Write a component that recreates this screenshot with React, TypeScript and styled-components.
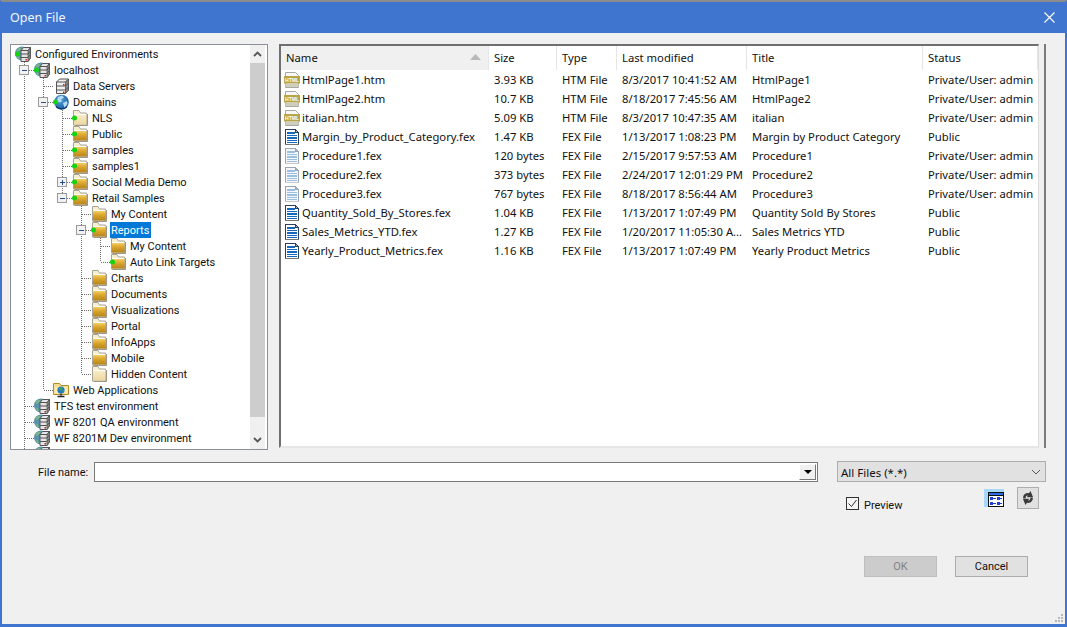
import React from 'react';
import styled, { createGlobalStyle } from 'styled-components';

const Global = createGlobalStyle`
  html, body { margin: 0; padding: 0; background: #f0f0f0; }
  * { box-sizing: border-box; }
`;

const narrowFont = `Roboto, "Noto Sans", sans-serif`;

const Window = styled.div`
  width: 1067px; height: 627px; display: flex; flex-direction: column; overflow: hidden; position: relative;
  background: #f0f0f0; color: #111;
  font-family: ${narrowFont}; font-size: 11px;
  border-top: 2px solid #8c8c8c; border-left: 2px solid #3f75cf; border-right: 2px solid #3f75cf; border-bottom: 3px solid #3f75cf;
`;
const TitleBar = styled.div`
  height: 31px; flex: none; background: #3f75cf; color: #f2f6fc; display: flex; align-items: center; justify-content: space-between;
  padding: 0 10px 0 8px; font-family: "Noto Sans", sans-serif; font-size: 12.5px;
`;
const Panels = styled.div`
  display: flex; gap: 11px; padding: 11px 19px 0 8px; height: 428px; flex: none; align-items: flex-start;
`;
const TreePanel = styled.div`
  width: 258px; height: 406px; flex: none; display: flex; background: #fff; border: 1px solid #8a8f98; overflow: hidden;
  padding: 0 2px 0 0;
`;
const TreeList = styled.div`flex: 1; padding-top: 1px; overflow: hidden; min-width: 0;`;
const Row = styled.div`height: 16px; display: flex; align-items: center; white-space: nowrap;`;
const RowLabel = styled.span<{ $selected?: boolean }>`
  margin-left: 3px; padding: 0 2px 0 1px; height: 16px; line-height: 18px;
  background: ${p => (p.$selected ? '#0078d7' : 'transparent')};
  color: ${p => (p.$selected ? '#fff' : '#111')};
`;
const ScrollBar = styled.div`
  width: 15px; flex: none; background: #f0f0f0; display: flex; flex-direction: column;
`;
const ScrollArrow = styled.div`height: 18px; flex: none; display: flex; align-items: center; justify-content: center;`;
const ScrollTrack = styled.div`flex: 1; display: flex; flex-direction: column;`;
const ScrollThumb = styled.div`height: 354px; background: #cdcdcd;`;

const ListFrame = styled.div`
  width: 767px; height: 404px; flex: none; display: flex; border-right: 2px solid #7a7a7a; padding-right: 5px;
`;
const ListInner = styled.div`
  flex: 1; min-width: 0; background: #fff; border-top: 2px solid #6f6f6f; border-left: 2px solid #6f6f6f;
  border-right: 1px solid #dcdcdc; border-bottom: 2px solid #e6e6e6; overflow: hidden;
  font-family: "Noto Sans", sans-serif; font-size: 11.25px;
`;
const gridCols = '208px 68px 60px 130px 176px 1fr';
const HeaderRow = styled.div`display: grid; grid-template-columns: ${gridCols}; height: 24px;`;
const HeaderCell = styled.div<{ $sorted?: boolean }>`
  display: flex; align-items: center; justify-content: space-between; padding: 0 7px 2px 5px;
  background: ${p => (p.$sorted ? '#f0f0f0' : '#fff')};
  border-right: 1px solid #e5e5e5;
`;
const FileRow = styled.div`display: grid; grid-template-columns: ${gridCols}; height: 19px; align-items: center; white-space: nowrap;`;
const Cell = styled.div`padding-left: 5px; overflow: hidden;`;
const NameCell = styled.div`display: flex; align-items: center; gap: 2px; padding-left: 3px; overflow: hidden;`;

const FileNameRow = styled.div`
  display: flex; align-items: center; height: 21px; padding-left: 36px; flex: none;
`;
const FieldLabel = styled.span`width: 56px; flex: none; padding-top: 2px;`;
const NameInput = styled.div`
  width: 724px; height: 20px; flex: none; background: #fff; border: 1px solid #7a7a7a; display: flex; justify-content: flex-end; padding: 1px;
`;
const DropButton = styled.div`
  width: 17px; height: 16px; background: #f0f0f0; border: 1px solid; border-color: #fff #777 #777 #fff;
  display: flex; align-items: center; justify-content: center;
`;
const TypeSelect = styled.div`
  width: 209px; height: 21px; margin-left: 19px; flex: none; background: #e1e1e1; border: 1px solid #adadad; display: flex;
  align-items: center; justify-content: space-between; padding: 1px 4px 0 3px; font-family: "Noto Sans", sans-serif; font-size: 11.5px;
`;
const OptionsRow = styled.div`
  display: flex; align-items: flex-start; height: 29px; padding-left: 844px; margin-top: 5px; flex: none;
`;
const PreviewField = styled.label`display: flex; align-items: center; gap: 5px; width: 138px; margin-top: 10px; height: 13px;`;
const PreviewText = styled.span`padding-top: 3px;`;
const CheckBox = styled.span`
  width: 13px; height: 13px; border: 1px solid #333; background: #f4f4f4; display: flex; align-items: center; justify-content: center;
`;
const ToggleIcon = styled.div`
  width: 20px; height: 18px; margin-top: 2px; background: #a9d8ff; display: flex; align-items: flex-end; justify-content: flex-end; flex: none;
`;
const IconButton = styled.div`
  width: 22px; height: 22px; margin-left: 13px; background: #e1e1e1; border: 1px solid #adadad; display: flex; align-items: center; justify-content: center; flex: none;
`;
const Footer = styled.div`display: flex; gap: 18px; padding-left: 862px; margin-top: 40px; flex: none;`;
const DialogButton = styled.div<{ $disabled?: boolean }>`
  width: 73px; height: 21px; display: flex; align-items: center; justify-content: center;
  background: ${p => (p.$disabled ? '#cccccc' : '#e1e1e1')};
  border: 1px solid ${p => (p.$disabled ? '#bfbfbf' : '#adadad')};
  color: ${p => (p.$disabled ? '#838383' : '#111')};
`;
const Grip = styled.svg`position: absolute; right: 1px; bottom: 1px;`;

const Dot = () => <circle cx="2.500" cy="8" r="2.500" fill="#12d512" />;

const Defs = () => (
  <svg width="0" height="0" style={{ position: 'absolute' }}>
    <defs>
      <linearGradient id="gold" x1="0" y1="0" x2="0" y2="1">
        <stop offset="0" stopColor="#f4cf6a" />
        <stop offset="0.35" stopColor="#e0ab30" />
        <stop offset="1" stopColor="#b5831a" />
      </linearGradient>
      <linearGradient id="paleGold" x1="0" y1="0" x2="0" y2="1">
        <stop offset="0" stopColor="#f8ecc6" />
        <stop offset="1" stopColor="#ecd79f" />
      </linearGradient>
      <radialGradient id="blueGlobe" cx="0.4" cy="0.35" r="0.75">
        <stop offset="0" stopColor="#5ea9dd" />
        <stop offset="1" stopColor="#0e4f98" />
      </radialGradient>
    </defs>
  </svg>
);

const FolderIcon = ({ pale, dot }: { pale?: boolean; dot?: boolean }) => (
  <svg width="16" height="16" viewBox="0 0 16 16">
    <path d="M1.500 .5h5.500l1.500 2.500h6v12h-13z" fill="#f8eed2" stroke="#a8a397" />
    <path d="M2 4.500h12.500" stroke="#fff" />
    <rect x="2" y="5" width="12.500" height="9.500" fill={pale ? 'url(#paleGold)' : 'url(#gold)'} />
    <path d="M15.500 4v11.500H2.500" fill="none" stroke="#9b9689" />
    {dot && <Dot />}
  </svg>
);

const ServerStack = () => (
  <g>
    <path d="M3.500 4l3-3h9v11l-3 3.500h-9z" fill="#efefef" stroke="#555" />
    <path d="M12.500 4v11.500l3-3.500V1z" fill="#8a8a8a" stroke="#555" strokeWidth=".8" />
    <path d="M3.500 4h9l3-3M3.500 8h9l3-3M3.500 12h9l3-3" fill="none" stroke="#555" />
    <rect x="10" y="6" width="1.500" height="1.500" fill="#d41b1b" />
    <rect x="10" y="13.500" width="1.500" height="1.500" fill="#d41b1b" />
  </g>
);

const ServersIcon = () => <svg width="16" height="16" viewBox="0 0 16 16"><ServerStack /></svg>;

const ServerStackOverGlobe = () => (
  <g>
    <path d="M6 4.500l2.500-3h7v10.500l-2.500 3.500h-7z" fill="#e4e4e4" stroke="#555" />
    <path d="M13 4.500v11l2.500-3.500V1.500z" fill="#8a8a8a" stroke="#555" strokeWidth=".8" />
    <path d="M6 4.500h7l2.500-3M6 8h7l2.500-3M6 11.500h7l2.500-3" fill="none" stroke="#555" />
    <rect x="10.500" y="13" width="1.500" height="1.500" fill="#d41b1b" />
    <path d="M1.500 4l3-2.500 2 1-2 2.500-2 1zM1.500 10l2.500 .5 1 3-2-.5z" fill="#7ab488" />
  </g>
);

const ServerGlobeIcon = ({ dot }: { dot?: boolean }) => (
  <svg width="16" height="16" viewBox="0 0 16 16">
    <circle cx="7" cy="7.500" r="7" fill="#5a93ad" />
    <ServerStackOverGlobe />
    {dot && <Dot />}
  </svg>
);

const GlobeIcon = ({ dot }: { dot?: boolean }) => (
  <svg width="16" height="16" viewBox="0 0 16 16">
    <circle cx="8.500" cy="8" r="7.300" fill="url(#blueGlobe)" />
    <path d="M5 3l4-1.500 2 2-3 2 1 2-3 1-2-2zM10 9l4-2 .5 3-3 4z" fill="#b5dcf3" />
    <path d="M3 12.500a7.300 7.300 0 0 0 11 0" fill="none" stroke="#0b3a70" strokeWidth="1.300" />
    {dot && <Dot />}
  </svg>
);

const WebAppIcon = () => (
  <svg width="16" height="16" viewBox="0 0 16 16">
    <path d="M.5 1.500h6l1.500 2h7.500v9H.5z" fill="#f6dd93" stroke="#b58b26" />
    <path d="M1.500 5h13v6.500h-13z" fill="#fbe9ae" />
    <circle cx="8" cy="8" r="3.600" fill="#1f78c8" />
    <path d="M6 6l2.500-1 1 2-2 2zM9 9l2-1-.5 2z" fill="#3dae45" />
    <path d="M8 11.500v2M4.500 14.500h7" stroke="#222" strokeWidth="1.400" />
  </svg>
);

const HtmlBadge = styled.svg`flex: none; overflow: visible;`;
const HtmlIcon = () => (
  <HtmlBadge width="16" height="16" viewBox="0 0 16 16">
    <path d="M1.500 .5h10l3 3v12h-13z" fill="#f7f7f7" stroke="#a9a9a0" />
    <rect x="0" y="4" width="16" height="7.500" fill="#b9a447" />
    <text x="1" y="10" fontFamily="Liberation Sans, sans-serif" fontSize="5.500" fontWeight="700" fill="#fff" textLength="14" lengthAdjust="spacingAndGlyphs">HTML</text>
    <rect x="1.500" y="11.500" width="13" height="3.500" fill="#cfcdbd" />
  </HtmlBadge>
);

const FexIcon = ({ light }: { light?: boolean }) => (
  <svg width="16" height="16" viewBox="0 0 16 16" shapeRendering="crispEdges" style={{ flex: 'none' }}>
    <path d="M1.500 .5h10l3 3v12h-13z" fill={light ? '#f5f7fa' : '#fff'} stroke={light ? '#9aa5b2' : '#2d3f5e'} />
    <path d="M11.500 .5v3h3z" fill="#aeb6c2" stroke={light ? '#9aa5b2' : '#2d3f5e'} />
    <rect x="3" y="3" width="8" height="1.500" fill={light ? '#9bbfe0' : '#1668bd'} />
    <rect x="3" y="5.500" width="10" height="1.500" fill={light ? '#9bbfe0' : '#1668bd'} />
    <rect x="3" y="8" width="10" height="1.500" fill={light ? '#9bbfe0' : '#1668bd'} />
    <rect x="3" y="10.500" width="10" height="1.500" fill={light ? '#9bbfe0' : '#1668bd'} />
    <rect x="3" y="13" width="10" height="1" fill={light ? '#9bbfe0' : '#1668bd'} />
    <rect x="1" y="15" width="14" height="1" fill={light ? '#c9c9c9' : '#777'} />
  </svg>
);

type IconKind = 'serverGlobe' | 'servers' | 'globe' | 'folder' | 'pale' | 'web';
type TreeItem = { d: number; icon: IconKind; label: string; dot?: boolean; exp?: '+' | '-'; sel?: boolean };

const tree: TreeItem[] = [
  { d: 0, icon: 'serverGlobe', label: 'Configured Environments', dot: true },
  { d: 1, icon: 'serverGlobe', label: 'localhost', dot: true, exp: '-' },
  { d: 2, icon: 'servers', label: 'Data Servers' },
  { d: 2, icon: 'globe', label: 'Domains', dot: true, exp: '-' },
  { d: 3, icon: 'pale', label: 'NLS', dot: true },
  { d: 3, icon: 'folder', label: 'Public', dot: true },
  { d: 3, icon: 'folder', label: 'samples', dot: true },
  { d: 3, icon: 'folder', label: 'samples1', dot: true },
  { d: 3, icon: 'folder', label: 'Social Media Demo', dot: true, exp: '+' },
  { d: 3, icon: 'folder', label: 'Retail Samples', dot: true, exp: '-' },
  { d: 4, icon: 'folder', label: 'My Content' },
  { d: 4, icon: 'folder', label: 'Reports', dot: true, exp: '-', sel: true },
  { d: 5, icon: 'folder', label: 'My Content' },
  { d: 5, icon: 'folder', label: 'Auto Link Targets', dot: true },
  { d: 4, icon: 'folder', label: 'Charts' },
  { d: 4, icon: 'folder', label: 'Documents' },
  { d: 4, icon: 'folder', label: 'Visualizations' },
  { d: 4, icon: 'folder', label: 'Portal' },
  { d: 4, icon: 'folder', label: 'InfoApps' },
  { d: 4, icon: 'folder', label: 'Mobile' },
  { d: 4, icon: 'pale', label: 'Hidden Content' },
  { d: 2, icon: 'web', label: 'Web Applications' },
  { d: 1, icon: 'serverGlobe', label: 'TFS test environment' },
  { d: 1, icon: 'serverGlobe', label: 'WF 8201 QA environment' },
  { d: 1, icon: 'serverGlobe', label: 'WF 8201M Dev environment' },
  { d: 1, icon: 'serverGlobe', label: '' },
];

const railContinues = (i: number, c: number) => {
  for (let j = i + 1; j < tree.length; j++) {
    if (tree[j].d < c) return false;
    if (tree[j].d === c) return true;
  }
  return c === 1;
};

const Guides = ({ i }: { i: number }) => {
  const { d, exp } = tree[i];
  const w = 4 + 19 * d;
  const rail = (c: number) => 19 * c - 5.500;
  const lines: React.ReactNode[] = [];
  for (let c = 1; c <= d; c++) {
    const cont = railContinues(i, c);
    if (c < d && cont) lines.push(<path key={c} d={`M${rail(c)} 0V16`} />);
    if (c === d) lines.push(<path key={c} d={`M${rail(c)} 0V${cont ? 16 : 8}M${rail(c)} 8.500H${w}`} />);
  }
  const bx = 19 * d - 10.500;
  return (
    <svg width={w} height="16" viewBox={`0 0 ${w} 16`} style={{ flex: 'none' }}>
      <g fill="none" stroke="#6e6e6e" strokeDasharray="1 1" shapeRendering="crispEdges">{lines}</g>
      {exp && (
        <g shapeRendering="crispEdges">
          <rect x={bx} y="3.500" width="9" height="9" fill="#f2f2f2" stroke="#9a9a9a" />
          <path d={`M${bx + 2} 8H${bx + 7}`} stroke="#2a4f86" />
          {exp === '+' && <path d={`M${bx + 4.500} 5.500V10.500`} stroke="#2a4f86" />}
        </g>
      )}
    </svg>
  );
};

const TreeIcon = ({ item }: { item: TreeItem }) => {
  switch (item.icon) {
    case 'serverGlobe': return <ServerGlobeIcon dot={item.dot} />;
    case 'servers': return <ServersIcon />;
    case 'globe': return <GlobeIcon dot={item.dot} />;
    case 'web': return <WebAppIcon />;
    case 'pale': return <FolderIcon pale dot={item.dot} />;
    default: return <FolderIcon dot={item.dot} />;
  }
};

const files = [
  ['html', 'HtmlPage1.htm', '3.93 KB', 'HTM File', '8/3/2017 10:41:52 AM', 'HtmlPage1', 'Private/User: admin'],
  ['html', 'HtmlPage2.htm', '10.7 KB', 'HTM File', '8/18/2017 7:45:56 AM', 'HtmlPage2', 'Private/User: admin'],
  ['html', 'italian.htm', '5.09 KB', 'HTM File', '8/3/2017 10:47:35 AM', 'italian', 'Private/User: admin'],
  ['fex', 'Margin_by_Product_Category.fex', '1.47 KB', 'FEX File', '1/13/2017 1:08:23 PM', 'Margin by Product Category', 'Public'],
  ['light', 'Procedure1.fex', '120 bytes', 'FEX File', '2/15/2017 9:57:53 AM', 'Procedure1', 'Private/User: admin'],
  ['light', 'Procedure2.fex', '373 bytes', 'FEX File', '2/24/2017 12:01:29 PM', 'Procedure2', 'Private/User: admin'],
  ['light', 'Procedure3.fex', '767 bytes', 'FEX File', '8/18/2017 8:56:44 AM', 'Procedure3', 'Private/User: admin'],
  ['fex', 'Quantity_Sold_By_Stores.fex', '1.04 KB', 'FEX File', '1/13/2017 1:07:49 PM', 'Quantity Sold By Stores', 'Public'],
  ['fex', 'Sales_Metrics_YTD.fex', '1.27 KB', 'FEX File', '1/20/2017 11:05:30 A...', 'Sales Metrics YTD', 'Public'],
  ['fex', 'Yearly_Product_Metrics.fex', '1.16 KB', 'FEX File', '1/13/2017 1:07:49 PM', 'Yearly Product Metrics', 'Public'],
];

const headers = ['Size', 'Type', 'Last modified', 'Title', 'Status'];

export default function App() {
  return (
    <Window>
      <Global />
      <Defs />
      <TitleBar>
        <span>Open File</span>
        <svg width="11" height="11" viewBox="0 0 11 11"><path d="M.5.5l10 10M10.500.5l-10 10" stroke="#fff" strokeWidth="1.100" /></svg>
      </TitleBar>
      <Panels>
        <TreePanel>
          <TreeList>
            {tree.map((item, i) => (
              <Row key={i}>
                <Guides i={i} />
                <TreeIcon item={item} />
                {item.label && <RowLabel $selected={item.sel}>{item.label}</RowLabel>}
              </Row>
            ))}
          </TreeList>
          <ScrollBar>
            <ScrollArrow>
              <svg width="9" height="6" viewBox="0 0 9 6"><path d="M1 5l3.500-3.500L8 5" fill="none" stroke="#555" strokeWidth="1.800" /></svg>
            </ScrollArrow>
            <ScrollTrack><ScrollThumb /></ScrollTrack>
            <ScrollArrow>
              <svg width="9" height="6" viewBox="0 0 9 6"><path d="M1 1l3.500 3.500L8 1" fill="none" stroke="#555" strokeWidth="1.800" /></svg>
            </ScrollArrow>
          </ScrollBar>
        </TreePanel>
        <ListFrame>
          <ListInner>
            <HeaderRow>
              <HeaderCell $sorted>
                <span>Name</span>
                <svg width="11" height="6" viewBox="0 0 11 6"><path d="M5.500 0L11 6H0z" fill="#b9b9b9" /></svg>
              </HeaderCell>
              {headers.map(h => <HeaderCell key={h}><span>{h}</span></HeaderCell>)}
            </HeaderRow>
            {files.map(([kind, name, ...rest]) => (
              <FileRow key={name}>
                <NameCell>
                  {kind === 'html' ? <HtmlIcon /> : <FexIcon light={kind === 'light'} />}
                  <span>{name}</span>
                </NameCell>
                {rest.map((v, i) => <Cell key={i}>{v}</Cell>)}
              </FileRow>
            ))}
          </ListInner>
        </ListFrame>
      </Panels>
      <FileNameRow>
        <FieldLabel>File name:</FieldLabel>
        <NameInput>
          <DropButton>
            <svg width="8" height="4" viewBox="0 0 8 4"><path d="M0 0h8L4 4z" fill="#000" /></svg>
          </DropButton>
        </NameInput>
        <TypeSelect>
          <span>All Files (*.*)</span>
          <svg width="10" height="6" viewBox="0 0 10 6"><path d="M1 1l4 4 4-4" fill="none" stroke="#555" /></svg>
        </TypeSelect>
      </FileNameRow>
      <OptionsRow>
        <PreviewField>
          <CheckBox>
            <svg width="11" height="11" viewBox="0 0 11 11"><path d="M1.500 5.500l3 3 5-6.500" fill="none" stroke="#333" /></svg>
          </CheckBox>
          <PreviewText>Preview</PreviewText>
        </PreviewField>
        <ToggleIcon>
          <svg width="16" height="15" viewBox="0 0 16 15" shapeRendering="crispEdges">
            <rect x="0" y="0" width="16" height="15" fill="#111" />
            <rect x="1" y="1" width="14" height="2" fill="#2a6fe8" />
            <rect x="1" y="4" width="14" height="10" fill="#fff" />
            <path d="M2 5h3v3H2zM9 5h3v3H9zM2 10h3v3H2zM9 10h3v3H9z" fill="#1f3fd0" />
            <path d="M5 6h3M12 6h2M5 11h3M12 11h2" stroke="#1f3fd0" />
          </svg>
        </ToggleIcon>
        <IconButton>
          <svg width="14" height="16" viewBox="0 0 14 16">
            <path d="M2.200 8.500C1.800 5 4.500 2.500 8 3.200L9.500 1l2.500 6-6.200.3 1.200-1.800C5.200 5.300 4.300 6.800 4.800 8.500z" fill="#3a3a3a" />
            <path d="M11.800 7.500c.4 3.500-2.300 6-5.800 5.300L4.500 15 2 9l6.200-.3L7 10.500c1.800.2 2.700-1.300 2.200-3z" fill="#3a3a3a" />
          </svg>
        </IconButton>
      </OptionsRow>
      <Footer>
        <DialogButton $disabled>OK</DialogButton>
        <DialogButton>Cancel</DialogButton>
      </Footer>
      <Grip width="10" height="10" viewBox="0 0 10 10">
        <path d="M7 1h2v2H7zM4 4h2v2H4zM7 4h2v2H7zM1 7h2v2H1zM4 7h2v2H4zM7 7h2v2H7z" fill="#b8b8b8" />
      </Grip>
    </Window>
  );
}
